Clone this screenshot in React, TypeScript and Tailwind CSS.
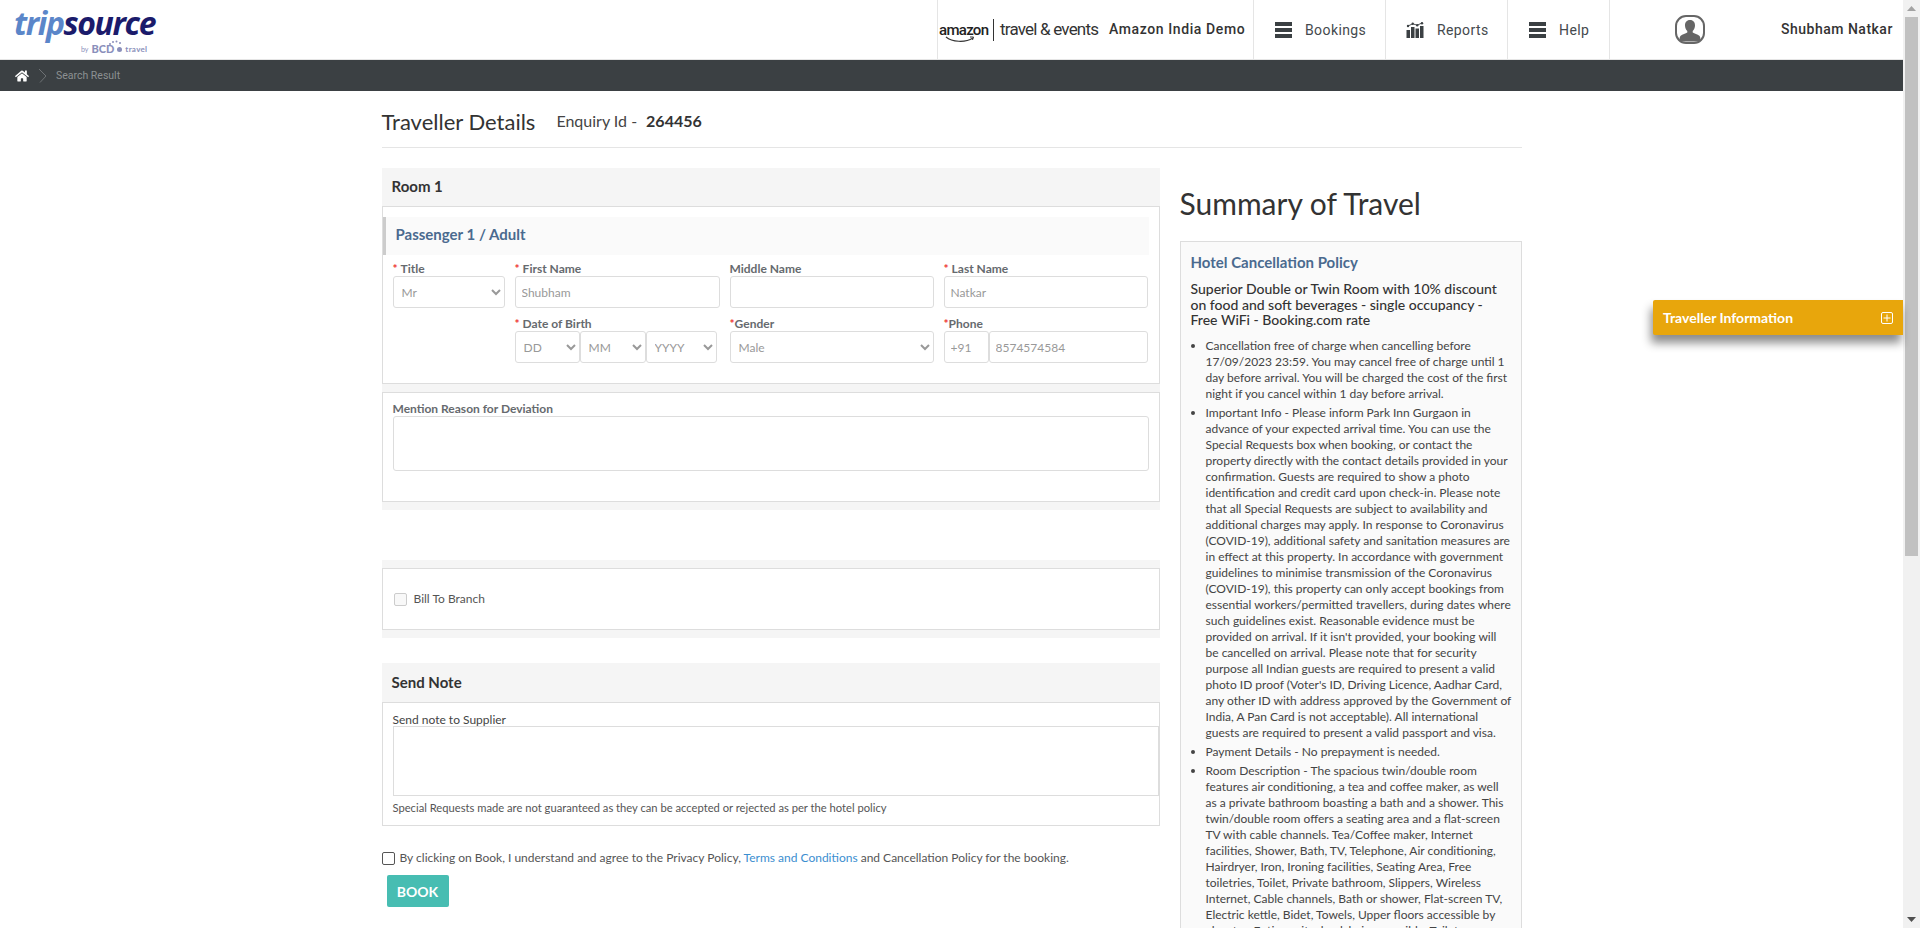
import { FaHome } from "react-icons/fa";

const Bars = () => (
  <div className="flex w-[17px] flex-col gap-[2px]">
    <span className="h-[4px] bg-[#3b4043]" />
    <span className="h-[4px] bg-[#3b4043]" />
    <span className="h-[4px] bg-[#3b4043]" />
  </div>
);

const ReportsIcon = () => (
  <svg width="18" height="16" viewBox="0 0 18 16" fill="#3b4043">
    <rect x="0.500" y="8" width="3.500" height="8" />
    <rect x="5" y="5" width="3.500" height="11" />
    <rect x="9.500" y="6.500" width="3.500" height="9.500" />
    <rect x="14" y="4" width="3.500" height="12" />
    <path d="M2 4L6.700 1.800 11.200 3.200 16 1" fill="none" stroke="#3b4043" strokeWidth="0.900" />
    <circle cx="2" cy="4" r="1.200" />
    <circle cx="6.700" cy="1.800" r="1.200" />
    <circle cx="11.200" cy="3.200" r="1.200" />
    <circle cx="16" cy="1.200" r="1.200" />
  </svg>
);

const Avatar = () => (
  <svg width="30" height="29" viewBox="0 0 30 29">
    <rect x="1" y="1" width="28" height="27" rx="10" fill="#fff" stroke="#666" strokeWidth="2" />
    <path
      d="M15 5c-3.400 0-5.200 2.600-5 5.800.1 2.200 1 4 2.300 5.200v1.600c-1.600 1.200-5 1.800-6.600 3.200-.9.8-1.200 2.400-1.200 4.200 1 1 2 1.500 3.500 1.500h14c1.500 0 2.500-.5 3.500-1.500 0-1.800-.3-3.400-1.200-4.200-1.600-1.400-5-2-6.600-3.200V16c1.300-1.200 2.200-3 2.300-5.200.2-3.200-1.600-5.800-5-5.800z"
      fill="#666"
    />
  </svg>
);

const NavItem = ({ icon, label, width }: { icon: React.ReactNode; label: string; width: string }) => (
  <div className={`flex h-full items-center border-r border-[#e5e5e5] pl-[20px] ${width}`}>
    <div className="mr-[13px] flex w-[18px] justify-center">{icon}</div>
    <span className="pt-[1px] font-['Roboto',sans-serif] text-[14px] tracking-[0.4px] text-[#44494d]">{label}</span>
  </div>
);

const Label = ({ text, star, tight }: { text: string; star?: boolean; tight?: boolean }) => (
  <label className="block h-[14px] text-[12px] leading-[14px] font-bold text-[#666a6e]">
    {star && <span className={`text-[#e33] ${tight ? "" : "mr-[3px]"}`}>*</span>}
    {text}
  </label>
);

const inputCls = "h-[32px] rounded-[3px] border border-[#ddd] bg-white text-[12px] text-[#999] outline-none";

const TextField = ({ value, className = "w-full" }: { value: string; className?: string }) => (
  <input readOnly defaultValue={value} className={`${inputCls} px-[6px] ${className}`} />
);

const SelectField = ({ value, className = "w-full" }: { value: string; className?: string }) => (
  <select defaultValue={value} className={`${inputCls} px-[4px] ${className}`}>
    <option>{value}</option>
  </select>
);

const Strip = () => <div className="h-[8px] bg-[#f5f5f5]" />;

const SectionHead = ({ title, height }: { title: string; height: string }) => (
  <div className={`flex items-center bg-[#f5f5f5] pb-[1px] pl-[10px] text-[15px] font-bold text-[#333] ${height}`}>{title}</div>
);

const Policy = ({ children }: { children: React.ReactNode }) => (
  <li className="mb-[3px] list-disc">{children}</li>
);

export default function App() {
  return (
    <div className="flex h-[928px] overflow-hidden bg-white font-['Lato',sans-serif] text-[#333]">
      <div className="relative min-w-0 flex-1">
        {/* Header */}
        <header className="flex h-[60px] items-center border-b border-[#e5e5e5]">
          <div className="ml-[14px] w-[923px] shrink-0">
            <div className="h-[36px] font-['Open_Sans',sans-serif] text-[32px] leading-[36px] font-bold tracking-[-1.400px] italic">
              <span className="text-[#5b86c9]">trip</span>
              <span className="text-[#1b1b6b]">source</span>
            </div>
            <div className="relative ml-[67px] flex h-[14px] items-end gap-[3px] text-[#8a8fbb]">
              <span className="text-[7px] leading-[12px]">by</span>
              <span className="text-[11px] leading-[12px] font-black">BCD</span>
              <span className="mb-[3px] h-[5px] w-[5px] rounded-full bg-[#8a8fbb]" />
              <span className="text-[8px] leading-[12px] font-bold tracking-[0.3px]">travel</span>
              <svg className="absolute top-[-1px] left-[27px]" width="14" height="6" viewBox="0 0 14 6" fill="#8a8fbb">
                <circle cx="2" cy="4" r="1" />
                <circle cx="5" cy="2" r="1" />
                <circle cx="8.500" cy="1.500" r="1" />
                <circle cx="12" cy="3" r="1" />
              </svg>
            </div>
          </div>
          <div className="flex h-full w-[317px] items-center border-r border-l border-[#e5e5e5] pl-[1px]">
            <div className="relative w-[48px] font-['Roboto',sans-serif] text-[15px] leading-[16px] font-medium tracking-[-0.7px] text-[#222]">
              amazon
              <svg className="absolute top-[14px] left-[6px]" width="30" height="8" viewBox="0 0 30 8" fill="none">
                <path d="M1 1c6 5 19 6 27 1" stroke="#333" strokeWidth="1.200" />
                <path d="M25 1l3.500 0-1 3" stroke="#333" strokeWidth="1" />
              </svg>
            </div>
            <span className="mx-[6px] h-[22px] w-px bg-[#333]" />
            <span className="w-[100px] font-['Roboto',sans-serif] text-[17px] tracking-[-0.8px] whitespace-nowrap text-[#333]">
              travel &amp; events
            </span>
            <span className="ml-[9px] font-['Roboto',sans-serif] text-[14px] font-medium tracking-[0.6px] whitespace-nowrap text-[#333]">
              Amazon India Demo
            </span>
          </div>
          <NavItem icon={<Bars />} label="Bookings" width="w-[132px]" />
          <NavItem icon={<ReportsIcon />} label="Reports" width="w-[122px]" />
          <NavItem icon={<Bars />} label="Help" width="w-[102px]" />
          <div className="ml-[65px]">
            <Avatar />
          </div>
          <span className="ml-[76px] font-['Roboto',sans-serif] text-[14px] font-medium tracking-[0.5px] whitespace-nowrap text-[#333]">
            Shubham Natkar
          </span>
        </header>

        {/* Breadcrumb */}
        <div className="flex h-[31px] items-center bg-[#3b4043] pl-[15px]">
          <FaHome className="text-[14px] text-white" />
          <svg className="ml-[9px]" width="9" height="15" viewBox="0 0 9 15" fill="none">
            <path d="M1 1l7 7-6 6.500" stroke="#6d7174" strokeWidth="1" />
          </svg>
          <span className="ml-[9px] font-['Roboto',sans-serif] text-[10.500px] text-[#8c9092]">Search Result</span>
        </div>

        <main className="mx-auto w-[1140px]">
          <div className="flex h-[57px] items-center border-b border-[#e5e5e5] pt-[4px]">
            <h1 className="text-[22px] text-[#333]">Traveller Details</h1>
            <span className="ml-[21px] text-[16px] text-[#444]">Enquiry Id -</span>
            <span className="ml-[9px] text-[16px] font-bold text-[#333]">264456</span>
          </div>

          <div className="mt-[20px] flex gap-[20px]">
            {/* Left column */}
            <div className="w-[778px] shrink-0">
              <SectionHead title="Room 1" height="h-[38px]" />
              <div className="h-[178px] border border-[#ddd] pt-[10px]">
                <div className="mr-[10px] flex h-[38px] items-center border-l-[3px] border-[#ccc] bg-[#fafafa] pb-[3px] pl-[10px] text-[15px] font-bold text-[#4a6a8f]">
                  Passenger 1 / Adult
                </div>
                <div className="mt-[7px] ml-[10px] grid grid-cols-[112px_205px_204px_204px] gap-x-[10px] gap-y-[9px]">
                  <div>
                    <Label text="Title" star />
                    <SelectField value="Mr" />
                  </div>
                  <div>
                    <Label text="First Name" star />
                    <TextField value="Shubham" />
                  </div>
                  <div>
                    <Label text="Middle Name" />
                    <TextField value="" />
                  </div>
                  <div>
                    <Label text="Last Name" star />
                    <TextField value="Natkar" />
                  </div>
                  <div />
                  <div>
                    <Label text="Date of Birth" star />
                    <div className="flex w-[202px]">
                      <SelectField value="DD" className="w-[65px] shrink-0" />
                      <SelectField value="MM" className="w-[66px] shrink-0" />
                      <SelectField value="YYYY" className="w-[71px] shrink-0" />
                    </div>
                  </div>
                  <div>
                    <Label text="Gender" star tight />
                    <SelectField value="Male" />
                  </div>
                  <div>
                    <Label text="Phone" star tight />
                    <div className="flex">
                      <TextField value="+91" className="w-[45px] shrink-0" />
                      <TextField value="8574574584" className="w-[159px] shrink-0" />
                    </div>
                  </div>
                </div>
              </div>
              <Strip />
              <div className="h-[110px] border border-[#ddd] pt-[9px] pl-[10px]">
                <Label text="Mention Reason for Deviation" />
                <textarea className="h-[55px] w-[756px] resize-none rounded-[3px] border border-[#ddd] outline-none" />
              </div>
              <Strip />

              <div className="mt-[50px]">
                <Strip />
                <div className="flex h-[62px] items-center border border-[#ddd] pl-[11px]">
                  <span className="h-[13px] w-[13px] rounded-[2px] border border-[#ccc] bg-[#f8f8f8]" />
                  <span className="ml-[7px] text-[12px] text-[#555]">Bill To Branch</span>
                </div>
                <Strip />
              </div>

              <div className="mt-[25px]">
                <SectionHead title="Send Note" height="h-[39px]" />
                <div className="h-[124px] border border-[#ddd] pt-[10px] pl-[10px]">
                  <label className="block h-[13px] text-[12px] leading-[13px] text-[#444]">Send note to Supplier</label>
                  <textarea className="block h-[70px] w-[766px] resize-none border border-[#ddd] outline-none" />
                  <p className="mt-[5px] text-[11.200px] leading-[14px] text-[#555]">
                    Special Requests made are not guaranteed as they can be accepted or rejected as per the hotel policy
                  </p>
                </div>
              </div>

              <div className="mt-[23px] flex items-center text-[12px] text-[#555]">
                <input type="checkbox" readOnly className="m-0 h-[13px] w-[13px] appearance-none rounded-[2px] border border-[#555] bg-white" />
                <span className="ml-[5px]">
                  By clicking on Book, I understand and agree to the Privacy Policy,{" "}
                  <a className="text-[#3b8ed0]">Terms and Conditions</a> and Cancellation Policy for the booking.
                </span>
              </div>
              <button className="mt-[8px] ml-[5px] h-[32px] w-[62px] rounded-[2px] bg-[#47bdb2] text-[14px] font-bold text-white">
                BOOK
              </button>
            </div>

            {/* Right column */}
            <aside className="w-[342px]">
              <h2 className="flex h-[73px] items-center pb-[3px] text-[30px] text-[#333]">Summary of Travel</h2>
              <div className="h-[700px] border border-[#ddd] bg-[#fafafa] pt-[10px] pr-[9px] pl-[10px]">
                <h3 className="text-[15px] leading-[20px] font-bold text-[#4a6a8f]">Hotel Cancellation Policy</h3>
                <h4 className="mt-[9px] pr-[1px] text-[14px] leading-[15.500px] font-medium text-[#333]">
                  Superior Double or Twin Room with 10% discount on food and soft beverages - single occupancy - Free WiFi - Booking.com rate
                </h4>
                <ul className="mt-[10px] pl-[15px] text-[12px] leading-[16px] text-[#444]">
                  <Policy>
                    Cancellation free of charge when cancelling before 17/09/2023 23:59. You may cancel free of charge until 1 day before arrival. You will be charged the cost of the first night if you cancel within 1 day before arrival.
                  </Policy>
                  <Policy>
                    Important Info - Please inform Park Inn Gurgaon in advance of your expected arrival time. You can use the Special Requests box when booking, or contact the property directly with the contact details provided in your confirmation. Guests are required to show a photo identification and credit card upon check-in. Please note that all Special Requests are subject to availability and additional charges may apply. In response to Coronavirus (COVID-19), additional safety and sanitation measures are in effect at this property. In accordance with government guidelines to minimise transmission of the Coronavirus (COVID-19), this property can only accept bookings from essential workers/permitted travellers, during dates where such guidelines exist. Reasonable evidence must be provided on arrival. If it isn't provided, your booking will be cancelled on arrival. Please note that for security purpose all Indian guests are required to present a valid photo ID proof (Voter's ID, Driving Licence, Aadhar Card, any other ID with address approved by the Government of India, A Pan Card is not acceptable). All international guests are required to present a valid passport and visa.
                  </Policy>
                  <Policy>Payment Details - No prepayment is needed.</Policy>
                  <Policy>
                    Room Description - The spacious twin/double room features air conditioning, a tea and coffee maker, as well as a private bathroom boasting a bath and a shower. This twin/double room offers a seating area and a flat-screen TV with cable channels. Tea/Coffee maker, Internet facilities, Shower, Bath, TV, Telephone, Air conditioning, Hairdryer, Iron, Ironing facilities, Seating Area, Free toiletries, Toilet, Private bathroom, Slippers, Wireless Internet, Cable channels, Bath or shower, Flat-screen TV, Electric kettle, Bidet, Towels, Upper floors accessible by elevator, Entire unit wheelchair accessible, Toilet
                  </Policy>
                </ul>
              </div>
            </aside>
          </div>
        </main>

        {/* Floating panel */}
        <div className="absolute top-[300px] right-0 flex h-[35px] w-[250px] items-center justify-between rounded-l-[2px] bg-[#e8a60c] pr-[10px] pl-[10px] text-[14px] font-bold text-white shadow-[-2px_8px_10px_rgba(0,0,0,0.45)]">
          <span>Traveller Information</span>
          <svg width="12" height="12" viewBox="0 0 12 12" fill="none" stroke="#fff" strokeWidth="1">
            <rect x="0.500" y="0.500" width="11" height="11" rx="1.500" />
            <path d="M6 2.500v7M2.500 6h7" />
          </svg>
        </div>
      </div>

      {/* Scrollbar */}
      <div className="flex w-[17px] shrink-0 flex-col items-center bg-[#f1f1f1]">
        <svg className="mt-[6px]" width="9" height="5" viewBox="0 0 9 5" fill="#a3a3a3">
          <path d="M4.500 0L9 5H0z" />
        </svg>
        <div className="mt-[6px] h-[539px] w-[13px] bg-[#c1c1c1]" />
        <svg className="mt-auto mb-[6px]" width="9" height="5" viewBox="0 0 9 5" fill="#505050">
          <path d="M0 0h9L4.500 5z" />
        </svg>
      </div>
    </div>
  );
}
